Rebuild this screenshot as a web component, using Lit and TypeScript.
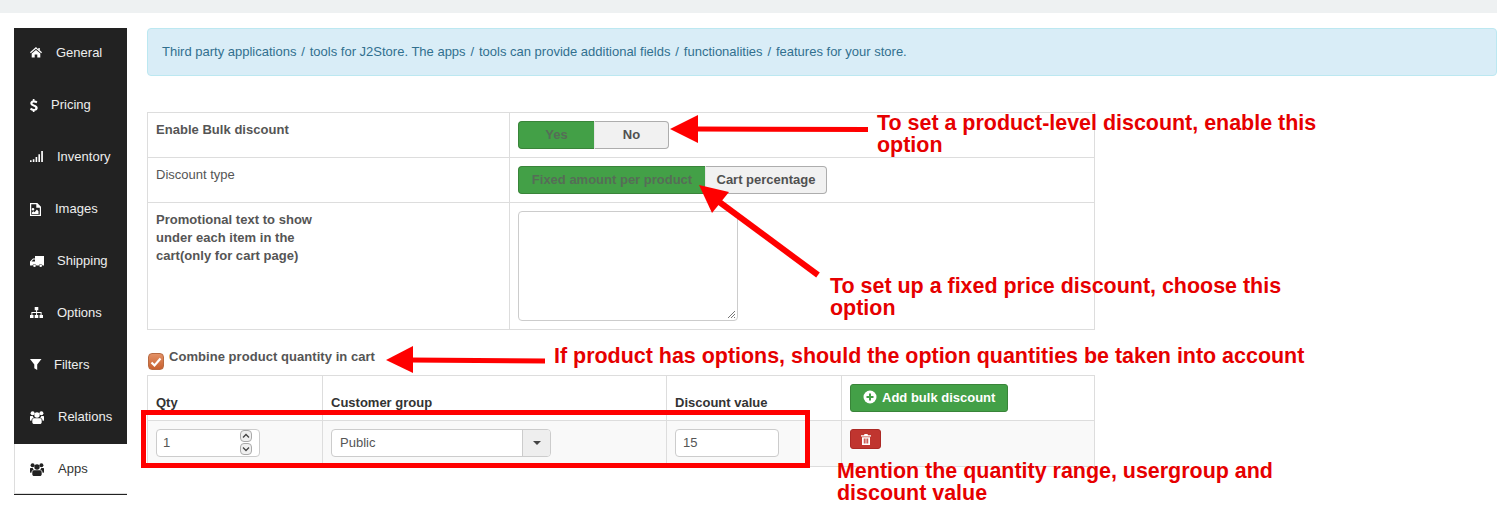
import { LitElement, html, css, svg } from "lit";
import { customElement } from "lit/decorators.js";

const icons: Record<string, any> = {
  home: svg`<path d="M6 1 0 6.300l.8.900L6 2.800l5.200 4.400.8-.9-2.200-2V2H8.300v1.500zM1.700 7.600V11.500h3V8.500h2.600v3h3V7.600L6 3.900z"/>`,
  dollar: svg`<path d="M2.800 1h1.700v1.500c1.100.1 2.100.5 2.900 1L6.500 5.300C5.700 4.800 4.800 4.400 3.900 4.400c-.9 0-1.400.3-1.400.9 0 .7.700 1 1.900 1.400C6.300 7.300 7.700 8.100 7.700 9.900c0 1.500-1.100 2.600-3.200 2.900V14H2.800v-1.200C1.700 12.700.6 12.200 0 11.500l1-1.800c.8.700 1.800 1.200 2.800 1.200 1 0 1.500-.4 1.500-1 0-.7-.6-1.100-1.900-1.500C1.500 7.800.3 7 .3 5.300.3 3.900 1.300 2.800 2.800 2.600z"/>`,
  signal: svg`<path d="M0 10.300h1.600V12H0zM2.800 9.300h1.600V12H2.800zM5.600 7h1.600v5H5.600zM8.400 4.300H10V12H8.400zM11.200 1h1.700v11h-1.700z"/>`,
  image: svg`<path fill-rule="evenodd" d="M0 1h7.300L11 4.700V14H0zm1.200 1.200v10.600h8.600V5.700H6.300V2.200zM3 6a1.300 1.300 0 1 1 0 2.600A1.300 1.300 0 0 1 3 6zM1.900 12v-1.500l1.500-1.300 1.200 1 2.300-2.600 1.600 1.700V12z"/>`,
  truck: svg`<path fill-rule="evenodd" d="M5 2h9v9.500h-1.400a2 2 0 0 0-3.900 0H6.400a2 2 0 0 0-3.900 0H0V7.500L3 4.500h2zM1.500 7.500H5V5.500H3.300zM4.500 10.400a1.300 1.300 0 1 1 0 2.600 1.300 1.300 0 0 1 0-2.600zm6.200 0a1.300 1.300 0 1 1 0 2.600 1.300 1.300 0 0 1 0-2.600z"/>`,
  sitemap: svg`<path d="M4.700 1h3.600v3.200H7.100v1.900h4.500v2.800h1.400V12H9.500V8.900h1.100V7.100H7.100v1.800h1.200V12H4.700V8.900h1.400V7.100H2.400v1.800h1.100V12H0V8.900h1.400V6.100h4.700V4.200H4.700z"/>`,
  filter: svg`<path d="M0 1h11.500L7.200 6.400V12L4.300 10.200V6.400z"/>`,
  users: svg`<circle cx="7" cy="5" r="2.700"/><circle cx="2.600" cy="3.300" r="2"/><circle cx="11.400" cy="3.300" r="2"/><path d="M3.900 8.300h6.200c1.200 0 1.600 1.200 1.600 2.400v1.500c0 1-.8 1.800-1.800 1.800H4.100c-1 0-1.800-.8-1.800-1.800v-1.500c0-1.200.4-2.400 1.600-2.400zM.7 5.900h2c.2.800.6 1.400 1.100 1.800-1.600.3-2.400 1.500-2.400 3.100H.9c-.5 0-.9-.4-.9-.9V7c0-.6.2-1.100.7-1.100zm10.600 0h2c.5 0 .7.500.7 1.100v2.900c0 .5-.4.900-.9.900h-.5c0-1.600-.8-2.800-2.400-3.100.5-.4.900-1 1.100-1.800z"/>`,
};

interface Item { name: string; icon: string; gap: number; active?: boolean }
const items: Item[] = [
  { name: "General", icon: "home", gap: 12 },
  { name: "Pricing", icon: "dollar", gap: 7 },
  { name: "Inventory", icon: "signal", gap: 13 },
  { name: "Images", icon: "image", gap: 11 },
  { name: "Shipping", icon: "truck", gap: 13 },
  { name: "Options", icon: "sitemap", gap: 13 },
  { name: "Filters", icon: "filter", gap: 10 },
  { name: "Relations", icon: "users", gap: 14 },
  { name: "Apps", icon: "users", gap: 14, active: true },
];

const slash = html`<span class="sl">/</span>`;

@customElement("app-root")
export class AppRoot extends LitElement {
  static styles = css`
    :host { display: block; position: relative; width: 1497px; height: 515px; overflow: hidden; background: #fff;
      font-family: "Liberation Sans", Arial, sans-serif; font-size: 13px; color: #555; }
    * { box-sizing: border-box; }
    .top { height: 13px; background: #eef1f2; }
    .layout { display: flex; padding: 15px 0 0 14px; gap: 20px; }
    .side { width: 113px; height: 467px; background: #222; flex: none; display: flex; flex-direction: column; }
    .item { height: 52px; display: flex; align-items: center; padding: 0 0 4px 16px; color: #eee; line-height: 1; }
    .item svg { width: 14px; height: 14px; fill: #fff; flex: none; margin-top: 2px; }
    .item.active { height: 50px; background: #fff; color: #333; border-left: 1px solid #ddd; border-bottom: 1px solid #ddd; padding-left: 15px; padding-bottom: 1px; }
    .item.active svg { fill: #222; }
    .main { flex: 1; min-width: 0; }
    .alert { height: 48px; background: #d9edf7; border: 1px solid #bce8f1; border-radius: 4px; color: #31708f; padding: 0 14px; display: block; line-height: 45px; margin-bottom: 36px; white-space: nowrap; }
    .sl { margin: 0 1.25px; }
    table { border-collapse: collapse; table-layout: fixed; width: 948px; }
    td, th { border: 1px solid #ddd; padding: 8px; vertical-align: top; text-align: left; line-height: 18px; font-size: 13px; }
    .t1 td { color: #555; }
    .t1 .c1 { width: 362px; }
    .t1 tr.r1 { height: 45px; }
    .t1 tr.r2 { height: 45px; }
    .t1 tr.r3 { height: 127px; }
    .label { font-weight: bold; letter-spacing: .03px; }
    .promo { width: 190px; display: block; }
    .toggle { display: inline-flex; height: 28px; border-radius: 4px; font-weight: bold; vertical-align: top; }
    .toggle span { display: flex; align-items: center; justify-content: center; border: 1px solid #adadad; background: #f1f1f1; color: #505050; }
    .toggle span:first-child { border-radius: 4px 0 0 4px; background: #43a047; border-color: #398439; color: #566d57; border-right: 0; }
    .toggle span:last-child { border-radius: 0 4px 4px 0; border-left-color: #e6e6e6; }
    .yes { width: 76px; }
    .no { width: 75px; }
    .fixed { width: 187px; }
    .cart { width: 122px; }
    .textarea { width: 220px; height: 110px; border: 1px solid #ccc; border-radius: 4px; position: relative; background: #fff; }
    .grip { position: absolute; right: 1px; bottom: 1px; width: 9px; height: 9px; }
    .check { display: flex; align-items: flex-start; height: 45px; padding: 18px 0 0 1px; font-weight: bold; gap: 5px; line-height: 18px; letter-spacing: .05px; }
    .cb { width: 16px; height: 17px; margin-top: 5px; border-radius: 4px; background: linear-gradient(#e39166, #c8602f); border: 1px solid #b86a42; display: flex; align-items: center; justify-content: center; flex: none; }
    .cb svg { width: 12px; height: 12px; }
    .t2 th { color: #333; vertical-align: bottom; padding: 8px; height: 45px; }
    .t2 td { background: #f9f9f9; height: 46px; }
    .input { height: 28px; border: 1px solid #ccc; border-radius: 4px; background: #fff; display: flex; align-items: center; padding: 0 7px; color: #555; position: relative; }
    .qty { width: 104px; padding: 0 6px; }
    .spin { position: absolute; right: 7px; top: 0; display: flex; flex-direction: column; gap: 1px; }
    .spin i { display: flex; width: 12px; height: 12px; border: 1px solid #aaa; border-radius: 4px; background: #f0f0f0; align-items: center; justify-content: center; }
    .spin svg { width: 8px; height: 6px; }
    .select { width: 220px; padding: 0 0 0 8px; }
    .select b { margin-left: auto; width: 28px; height: 100%; border-left: 1px solid #ccc; background: #eee; border-radius: 0 3px 3px 0; display: flex; align-items: center; justify-content: center; }
    .select b::after { content: ""; border: 4px solid transparent; border-top-color: #444; border-bottom: 0; }
    .disc { width: 104px; }
    .btn-add { display: inline-flex; align-items: center; gap: 5px; height: 28px; padding: 0 12px; background: #43a047; border: 1px solid #398439; border-radius: 3px; color: #fff; font-weight: bold; }
    .btn-add svg { width: 14px; height: 14px; margin-top: -2px; }
    .btn-del { display: flex; align-items: center; justify-content: center; width: 31px; height: 20px; background: #c0352f; border: 1px solid #ac2925; border-radius: 3px; }
    .btn-del svg { width: 10px; height: 11px; }
    .t2 .btn-cell { padding-top: 8px; }
    .t2 th.btn-th { vertical-align: top; padding-top: 8px; }
    .overlay { position: absolute; inset: 0; width: 1497px; height: 515px; pointer-events: none; }
    .note { position: absolute; color: #e60000; font-weight: bold; font-size: 21.45px; line-height: 22px; white-space: nowrap; }
  `;

  render() {
    return html`
      <div class="top"></div>
      <div class="layout">
        <nav class="side">
          ${items.map((i) => html`<div class="item ${i.active ? "active" : ""}">
            <svg viewBox="0 0 14 14" style="margin-right:${i.gap}px">${icons[i.icon]}</svg>${i.name}
          </div>`)}
        </nav>
        <div class="main">
          <div class="alert">Third party applications ${slash} tools for J2Store. The apps ${slash} tools can provide additional fields ${slash} functionalities ${slash} features for your store.</div>
          <table class="t1">
            <tr class="r1"><td class="c1 label">Enable Bulk discount</td>
              <td><div class="toggle"><span class="yes">Yes</span><span class="no">No</span></div></td></tr>
            <tr class="r2"><td class="c1">Discount type</td>
              <td><div class="toggle"><span class="fixed">Fixed amount per product</span><span class="cart">Cart percentage</span></div></td></tr>
            <tr class="r3"><td class="c1 label"><span class="promo">Promotional text to show under each item in the cart(only for cart page)</span></td>
              <td><div class="textarea"><svg class="grip" viewBox="0 0 9 9"><path d="M8 1 1 8M8 4 4 8M8 7 7 8" stroke="#777" fill="none"/></svg></div></td></tr>
          </table>
          <div class="check"><span class="cb"><svg viewBox="0 0 12 12"><path d="M1.500 6.500 4.500 9.500 10.500 2.500" stroke="#fff" stroke-width="2.200" fill="none"/></svg></span>Combine product quantity in cart</div>
          <table class="t2">
            <colgroup><col style="width:175px"><col style="width:344px"><col style="width:175px"><col></colgroup>
            <tr><th>Qty</th><th>Customer group</th><th>Discount value</th>
              <th class="btn-th"><span class="btn-add"><svg viewBox="0 0 14 14"><circle cx="7" cy="7" r="6.500" fill="#fff"/><path d="M7 3.500v7M3.500 7h7" stroke="#43a047" stroke-width="2"/></svg>Add bulk discount</span></th></tr>
            <tr>
              <td><div class="input qty">1<span class="spin"><i><svg viewBox="0 0 8 6"><path d="M1 4.500 4 1.500 7 4.500" stroke="#444" stroke-width="1.300" fill="none"/></svg></i><i><svg viewBox="0 0 8 6"><path d="M1 1.500 4 4.500 7 1.500" stroke="#444" stroke-width="1.300" fill="none"/></svg></i></span></div></td>
              <td><div class="input select">Public<b></b></div></td>
              <td><div class="input disc">15</div></td>
              <td class="btn-cell"><span class="btn-del"><svg viewBox="0 0 10 11"><path fill="#fff" d="M3.500 0h3l.5 1.200h3V2.400H0V1.200h3zM1 3.200h8V11H1zM2.800 4.500v5h1v-5zm1.700 0v5h1v-5zm1.700 0v5h1v-5z" fill-rule="evenodd"/></svg></span></td>
            </tr>
          </table>
        </div>
      </div>
      <svg class="overlay" viewBox="0 0 1497 515">
        <path d="M868 129.500 696 129" stroke="#f00" stroke-width="5" fill="none"/>
        <path d="M670 129 698 115V143z" fill="#f00"/>
        <path d="M818 275 718 201" stroke="#f00" stroke-width="6" fill="none"/>
        <path d="M699 185 729 192 712 213z" fill="#f00"/>
        <path d="M545 361 410 360" stroke="#f00" stroke-width="5" fill="none"/>
        <path d="M386 360 413 346V373z" fill="#f00"/>
        <rect x="143.500" y="412.500" width="664" height="53" stroke="#f00" stroke-width="5" fill="none"/>
      </svg>
      <div class="note" style="left:877px;top:112px">To set a product-level discount, enable this<br>option</div>
      <div class="note" style="left:830px;top:275px">To set up a fixed price discount, choose this<br>option</div>
      <div class="note" style="left:554px;top:345px">If product has options, should the option quantities be taken into account</div>
      <div class="note" style="left:837px;top:460px">Mention the quantity range, usergroup and<br>discount value</div>
    `;
  }
}
